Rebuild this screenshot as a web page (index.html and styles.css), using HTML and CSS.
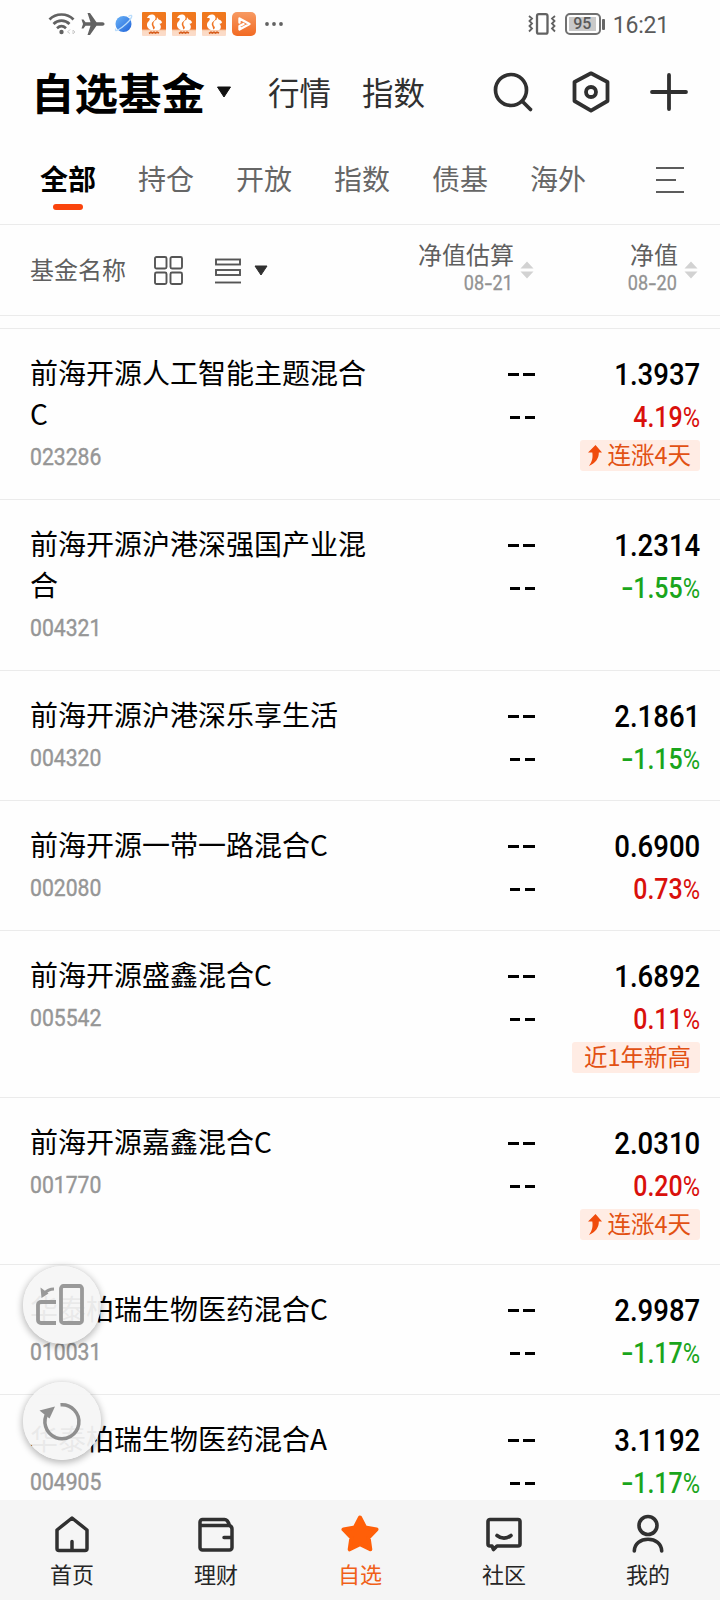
FILE: index.html
```html
<!DOCTYPE html>
<html lang="zh-CN">
<head>
<meta charset="utf-8">
<title>自选基金</title>
<link rel="stylesheet" href="styles.css">
</head>
<body>
<svg width="0" height="0" class="defs">
  <defs>
    <linearGradient id="orange" x1="0" y1="0" x2="0" y2="1"><stop offset="0" stop-color="#f07a1c"/><stop offset=".7" stop-color="#ef7226"/><stop offset=".78" stop-color="#fbd9c2"/><stop offset="1" stop-color="#fbdccb"/></linearGradient>
    <linearGradient id="play" x1="0" y1="0" x2="0" y2="1"><stop offset="0" stop-color="#f79a63"/><stop offset="1" stop-color="#f26a22"/></linearGradient>
    <linearGradient id="globe" x1="0" y1="0" x2="1" y2="1"><stop offset="0" stop-color="#6bb4f8"/><stop offset="1" stop-color="#1f62d8"/></linearGradient>
    <symbol id="squirrel" viewBox="0 0 24 24">
      <rect width="24" height="24" rx="1" fill="url(#orange)"/>
      <path d="M5 6C6.500 2.200 11 1.500 13 4c1.300 2 .2 4-1.500 5.200C9.500 10.500 9.200 12.500 10.500 14.500L11.500 18H9C6 17 4.500 14.500 5 12 5.400 10 7.500 9 8 6.800 7 6 6 6.200 5 6z" fill="#fff"/>
      <path d="M15 5.200l1.700 2.200c1.800.3 3 1.500 3.300 2.900-.4 1.200-1.500 1.500-2.700 1.500 1.500 1.200 2 3 1.200 4.600-.5 1-1.300 1.600-2.500 1.600h-5.500c1.700-.6 2.500-1.500 2.300-3-1.700-1.500-2-4-.6-5.700.7-.8 1.600-1.300 2.400-1.600z" fill="#fff"/>
      <path d="M7 21.500l2-1.300 1.300.8 1.700-.8 1.500.8 1.500-.8 2 .8" stroke="#d75d1c" stroke-width="1.600" fill="none"/>
    </symbol>
    <symbol id="sort" viewBox="0 0 14 18"><path d="M7 0.500L13.500 7.500H.5zM7 17.500L13.500 10.500H.5z" fill="#d2d2d2"/></symbol>
    <symbol id="rise" viewBox="0 0 14 21"><path d="M7.500 0L14 7.500H10.800C11 13.500 7.500 18 1 21 4.300 16.500 5 12.500 4.300 7.500H0z" fill="#f04b0c"/></symbol>
  </defs>
</svg>
<main class="screen">
  <header class="status">
    <svg class="st-wifi" width="28" height="24" viewBox="0 0 28 24" fill="none" stroke="#626262" stroke-width="2.700"><path d="M1.500 7.500C8 0.800 19 .8 25.500 7.500M5.500 12C10 7.500 17 7.500 21.500 12M9 16.200c3-2.700 6-2.700 9 0"/><circle cx="13.500" cy="20" r="2.200" fill="#626262" stroke="none"/><path d="M22 17.500l-2.500 2.500 2.500 1.500M25 18v4l2-2z" stroke="#ccc" stroke-width="1"/></svg>
    <svg class="st-plane" width="24" height="24" viewBox="0 0 24 24"><path d="M23.500 12c0-1-.8-1.700-2-1.700h-6L9 1H6.500l3 9.300H4.500L2.500 7.500H.5L2 12 .5 16.500h2l2-2.800h5L6.500 23H9l6.500-9.300h6c1.200 0 2-.7 2-1.700z" fill="#626262"/></svg>
    <svg class="st-globe" width="20" height="20" viewBox="0 0 20 20"><circle cx="9.500" cy="10" r="8" fill="url(#globe)"/><path d="M14.500 2.500C20-1 18 5 12 10 6 15.500-.5 19 2 14.500" fill="none" stroke="#b9dcfb" stroke-width="1.300"/></svg>
    <svg class="st-app" width="24" height="24"><use href="#squirrel"/></svg>
    <svg class="st-app" width="24" height="24"><use href="#squirrel"/></svg>
    <svg class="st-app" width="24" height="24"><use href="#squirrel"/></svg>
    <svg class="st-app" width="24" height="24" viewBox="0 0 24 24"><rect width="24" height="24" rx="5" fill="url(#play)"/><path d="M7.500 10.500V6.500L17.500 12 7.500 17.500V14l4-2" fill="none" stroke="#fff" stroke-width="2.400" stroke-linejoin="round" stroke-linecap="round"/></svg>
    <svg class="st-dots" width="18" height="4" viewBox="0 0 18 4" fill="#626262"><circle cx="2" cy="2" r="1.900"/><circle cx="9" cy="2" r="1.900"/><circle cx="16" cy="2" r="1.900"/></svg>
    <svg class="st-vib" width="28" height="22" viewBox="0 0 28 22" fill="none" stroke="#626262"><rect x="9" y="1.200" width="10.500" height="19.500" rx="1.800" stroke-width="2.300"/><path d="M1 3l3 2.500L1.500 8 4 10.500 1.500 13 4 15.500 1 18.500M27 3l-3 2.500L26.500 8 24 10.500l2.500 2.500-2.500 2.500 3 3" stroke-width="1.800"/></svg>
    <div class="battery"><span class="battery-level">95</span></div><i class="battery-tip"></i>
    <span class="clock">16:21</span>
  </header>

  <div class="titlebar">
    <h1 class="title">自选基金</h1>
    <svg class="caret" width="16" height="12" viewBox="0 0 16 12"><path d="M1.500 1h13L8 11z" fill="#111" stroke="#111" stroke-linejoin="round"/></svg>
    <span class="top-link">行情</span>
    <span class="top-link">指数</span>
    <div class="actions">
      <svg width="42" height="42" viewBox="0 0 42 42" fill="none" stroke="#303030" stroke-width="3.700" stroke-linecap="round"><circle cx="19" cy="19" r="15.500"/><path d="M30.500 30.500l8 8"/></svg>
      <svg width="42" height="44" viewBox="0 0 42 44" fill="none" stroke="#303030" stroke-width="3.800" stroke-linejoin="round"><path d="M21 3.300L37.500 12v19L21 40.700 4.500 31V12z"/><circle cx="21" cy="22" r="5"/></svg>
      <svg width="42" height="42" viewBox="0 0 42 42" stroke="#303030" stroke-width="3.800" stroke-linecap="round"><path d="M21 4v34M4 21h34"/></svg>
    </div>
  </div>

  <nav class="tabs">
    <span class="tab tab-on">全部</span><span class="tab">持仓</span><span class="tab">开放</span><span class="tab">指数</span><span class="tab">债基</span><span class="tab">海外</span>
    <svg class="tabs-menu" width="28" height="26" viewBox="0 0 28 26" stroke="#5c5c5c" stroke-width="2"><path d="M0 1h28M0 13h20M0 25h28"/></svg>
  </nav>

  <div class="columns">
    <span class="col-name">基金名称</span>
    <svg class="ic-grid" width="29" height="29" viewBox="0 0 29 29" fill="none" stroke="#555" stroke-width="1.900"><rect x="1" y="1" width="11.500" height="11.500" rx="1.500"/><rect x="16.500" y="1" width="11.500" height="11.500" rx="1.500"/><rect x="1" y="16.500" width="11.500" height="11.500" rx="1.500"/><rect x="16.500" y="16.500" width="11.500" height="11.500" rx="1.500"/></svg>
    <svg class="ic-list" width="26" height="26" viewBox="0 0 26 26" fill="none" stroke="#555" stroke-width="1.900"><rect x="1" y="1.500" width="24" height="5"/><rect x="1" y="12" width="24" height="5"/><path d="M0 24.500h26"/></svg>
    <svg class="ic-drop" width="14" height="11" viewBox="0 0 14 11"><path d="M1 1h12L7 10z" fill="#303030" stroke="#303030" stroke-linejoin="round"/></svg>
    <div class="sortcol"><div class="sort-text"><span class="sort-label">净值估算</span><span class="sort-date">08<em class="hy">-</em>21</span></div><svg width="14" height="18"><use href="#sort"/></svg></div>
    <div class="sortcol sortcol-last"><div class="sort-text"><span class="sort-label">净值</span><span class="sort-date">08<em class="hy">-</em>20</span></div><svg width="14" height="18"><use href="#sort"/></svg></div>
  </div>

  <section class="list">
    <article class="fund"><div class="info"><div class="name">前海开源人工智能主题混合C</div><div class="code">023286</div></div><div class="est"><i class="dash dash-lg"></i><i class="dash"></i></div><div class="nav"><b class="price">1.3937</b><b class="pct up">4.19<small>%</small></b><span class="tag"><svg width="14" height="21"><use href="#rise"/></svg><span class="tag-text">连涨4天</span></span></div></article>
    <article class="fund"><div class="info"><div class="name">前海开源沪港深强国产业混合</div><div class="code">004321</div></div><div class="est"><i class="dash dash-lg"></i><i class="dash"></i></div><div class="nav"><b class="price">1.2314</b><b class="pct down"><em class="hy">-</em>1.55<small>%</small></b></div></article>
    <article class="fund"><div class="info"><div class="name">前海开源沪港深乐享生活</div><div class="code">004320</div></div><div class="est"><i class="dash dash-lg"></i><i class="dash"></i></div><div class="nav"><b class="price">2.1861</b><b class="pct down"><em class="hy">-</em>1.15<small>%</small></b></div></article>
    <article class="fund"><div class="info"><div class="name">前海开源一带一路混合C</div><div class="code">002080</div></div><div class="est"><i class="dash dash-lg"></i><i class="dash"></i></div><div class="nav"><b class="price">0.6900</b><b class="pct up">0.73<small>%</small></b></div></article>
    <article class="fund"><div class="info"><div class="name">前海开源盛鑫混合C</div><div class="code">005542</div></div><div class="est"><i class="dash dash-lg"></i><i class="dash"></i></div><div class="nav"><b class="price">1.6892</b><b class="pct up">0.11<small>%</small></b><span class="tag tag-high"><span class="tag-text">近1年新高</span></span></div></article>
    <article class="fund"><div class="info"><div class="name">前海开源嘉鑫混合C</div><div class="code">001770</div></div><div class="est"><i class="dash dash-lg"></i><i class="dash"></i></div><div class="nav"><b class="price">2.0310</b><b class="pct up">0.20<small>%</small></b><span class="tag"><svg width="14" height="21"><use href="#rise"/></svg><span class="tag-text">连涨4天</span></span></div></article>
    <article class="fund"><div class="info"><div class="name">华泰柏瑞生物医药混合C</div><div class="code">010031</div></div><div class="est"><i class="dash dash-lg"></i><i class="dash"></i></div><div class="nav"><b class="price">2.9987</b><b class="pct down"><em class="hy">-</em>1.17<small>%</small></b></div></article>
    <article class="fund"><div class="info"><div class="name">华泰柏瑞生物医药混合A</div><div class="code">004905</div></div><div class="est"><i class="dash dash-lg"></i><i class="dash"></i></div><div class="nav"><b class="price">3.1192</b><b class="pct down"><em class="hy">-</em>1.17<small>%</small></b></div></article>
  </section>

  <div class="float float-rotate"><svg width="78" height="78" viewBox="0 0 78 78" fill="none" stroke="#999" stroke-width="3.800"><rect x="39" y="20" width="21" height="37" rx="2.500"/><path d="M34 36H19c-1.500 0-3 1-3 2.700V54c0 1.700 1.200 3 3 3h15"/><path d="M32 23c-5 0-7.500 2-9.500 4.500" stroke-width="3"/><path d="M18.500 21.500l1 10.500 7-4.500z" fill="#999" stroke="none"/></svg></div>
  <div class="float float-refresh"><svg width="78" height="78" viewBox="0 0 78 78" fill="none" stroke="#8f8f8f" stroke-width="3.500"><path d="M38.500 22.800A17 17 0 1 1 26 30"/><path d="M17.500 28.500L33 24.500l-5.500 12z" fill="#8f8f8f" stroke="none"/></svg></div>

  <footer class="bottom">
    <div class="item"><svg width="40" height="40" viewBox="0 0 40 40" fill="none" stroke="#303030" stroke-width="3.500" stroke-linejoin="round" stroke-linecap="round"><path d="M20 4L35 16V34.500a2 2 0 0 1-2 2H7a2 2 0 0 1-2-2V16zM20 27.500v8"/></svg><span>首页</span></div>
    <div class="item"><svg width="40" height="40" viewBox="0 0 40 40" fill="none" stroke="#303030" stroke-width="3.500" stroke-linejoin="round" stroke-linecap="round"><path d="M4 8a2.500 2.500 0 0 1 2.500-2.500h22c2.500 0 4 2.500 5 6 1.500.5 2.500 1.500 2.500 3.500V33.500a2.500 2.500 0 0 1-2.500 2.500H6.500A2.500 2.500 0 0 1 4 33.500zM4 11.500h29M28 23.500h8"/></svg><span>理财</span></div>
    <div class="item item-on"><svg width="40" height="40" viewBox="0 0 40 40"><path d="M20 3.500l5.200 10 11.300 1.900-7.900 8.200 1.700 11.700L20 30.200 9.700 35.300l1.700-11.700-7.900-8.200L14.800 13.500z" fill="#ff5f08" stroke="#ff5f08" stroke-width="4" stroke-linejoin="round"/></svg><span>自选</span></div>
    <div class="item"><svg width="40" height="40" viewBox="0 0 40 40" fill="none" stroke="#303030" stroke-width="3.600" stroke-linejoin="round" stroke-linecap="round"><path d="M6 5.500h28a2 2 0 0 1 2 2V30a2 2 0 0 1-2 2H13l-3.500 3.500L8 32H6a2 2 0 0 1-2-2V7.500a2 2 0 0 1 2-2zM13 21.500c4.500 3.500 9.500 3.500 14 0"/></svg><span>社区</span></div>
    <div class="item"><svg width="40" height="40" viewBox="0 0 40 40" fill="none" stroke="#303030" stroke-width="3.600" stroke-linecap="round"><circle cx="20" cy="11.500" r="9"/><path d="M6.300 37C6.500 29.500 12.500 25.300 20 25.300S33.500 29.500 33.700 37"/></svg><span>我的</span></div>
  </footer>
</main>
</body>
</html>
```

FILE: styles.css
```css
* { box-sizing: border-box; }
body { margin: 0; background: #fff; font-family: "Noto Sans CJK SC", sans-serif; color: #000; }
i { display: block; }
.defs { position: absolute; }
.screen { position: relative; width: 720px; height: 1600px; overflow: hidden; display: flex; flex-direction: column; background: #fefefe; }

.status { height: 48px; display: flex; align-items: center; padding: 0 51px 0 48px; font-family: Roboto, sans-serif; color: #5a5a5a; flex: none; }
.st-plane { margin-left: 5px; }
.st-globe { margin-left: 9px; margin-right: 0; }
.st-app { margin-left: 6px; }
.st-globe + .st-app { margin-left: 8px; }
.st-dots { margin-left: 9px; }
.st-vib { margin-left: auto; }
.battery { width: 36px; height: 22px; margin-left: 9px; padding: 2px; border: 2px solid #707070; border-radius: 5px; }
.battery-level { display: block; width: 27px; height: 14px; background: #c9c9c9; font-size: 16px; line-height: 14px; font-weight: 500; text-align: center; }
.battery-tip { width: 3px; height: 11px; margin-left: 1px; border-radius: 1px; background: #666; }
.clock { margin-left: 8px; font-size: 23px; line-height: 46px; padding-top: 3px; letter-spacing: -.2px; }

.titlebar { height: 88px; display: flex; align-items: center; padding: 0 30px 0 31px; flex: none; }
.title { margin: 0; font-size: 43.500px; line-height: 60px; font-weight: 700; }
.caret { margin-left: 11px; }
.top-link { margin: -3px 0 0 36px; font-size: 31.500px; color: #303030; }
.top-link + .top-link { margin-left: 31px; }
.actions { display: flex; align-items: center; gap: 36px; margin-left: auto; }

.tabs { height: 89px; display: flex; align-items: flex-start; gap: 42px; padding: 22px 36px 0 40px; border-bottom: 1px solid #ebebeb; flex: none; }
.tab { width: 56px; font-size: 28px; line-height: 41px; color: #666; text-align: center; white-space: nowrap; }
.tab-on { color: #000; font-weight: 700; }
.tab-on::after { content: ""; display: block; width: 30px; height: 6px; margin: 5px auto 0; border-radius: 3px; background: #fa440c; }
.tabs-menu { margin: 9px 0 0 auto; }

.columns { height: 91px; display: flex; align-items: center; padding: 0 22px 0 30px; border-bottom: 1px solid #ebebeb; color: #5f5f5f; flex: none; }
.col-name { font-size: 24px; margin-top: -3px; }
.ic-grid { margin-left: 28px; }
.ic-list { margin: 2px 0 0 32px; }
.ic-drop { margin-left: 13px; }
.sortcol { display: flex; align-items: center; gap: 6px; margin-left: auto; }
.sortcol-last { width: 164px; justify-content: flex-end; margin-left: 0; }
.sort-text { display: flex; flex-direction: column; align-items: flex-end; margin-top: -5px; }
.sort-label { font-size: 24px; line-height: 30px; }
.sort-date { font-family: Roboto, sans-serif; font-size: 20.500px; line-height: 28px; color: #929292; -webkit-text-stroke: .3px #929292; transform: scaleX(.88); transform-origin: right; padding-right: 1px; }
.hy { display: inline-block; font-style: normal; transform: scaleX(1.45); margin: 0 2px; }

.list { flex: 1; min-height: 0; overflow: hidden; margin-top: 12px; border-top: 1px solid #ebebeb; }
.fund { display: flex; align-items: flex-start; padding: 25px 20px 20px 30px; border-bottom: 1px solid #ebebeb; }
.info { width: 345px; margin-top: -2px; }
.name { font-size: 28px; line-height: 41px; word-break: break-all; }
.code { font-family: Roboto, sans-serif; font-size: 23px; line-height: 43px; padding-top: 2px; color: #969696; -webkit-text-stroke: .4px #969696; transform: scaleX(.92); transform-origin: left; }
.est { width: 160px; display: flex; flex-direction: column; align-items: flex-end; padding-top: 19px; gap: 40px; }
.dash { width: 25px; height: 3px; background: linear-gradient(90deg, #000 10px, transparent 10px, transparent 15px, #000 15px); }
.dash-lg { width: 27px; background: linear-gradient(90deg, #000 11px, transparent 11px, transparent 15px, #000 15px); }
.nav { flex: 1; display: flex; flex-direction: column; align-items: flex-end; }
.price, .pct { font-family: Roboto, sans-serif; font-weight: 500; transform-origin: right; white-space: nowrap; }
.price { font-size: 31.500px; line-height: 41px; transform: scaleX(.875); }
.pct { font-size: 29.500px; line-height: 43px; transform: translateY(1px) scaleX(.845); }
.pct small { font-size: 28px; font-weight: 400; }
.up { color: #d9100c; }
.down { color: #1aa51c; }
.tag { height: 31px; margin: 2px 0 4px; padding: 0 9px 0 8px; display: flex; align-items: center; gap: 5px; border-radius: 3px; background: #ffece4; color: #e25113; font-size: 23.500px; line-height: 31px; white-space: nowrap; }
.tag-text { margin-top: -3px; }
.tag-high { padding-left: 12px; }

.float { position: absolute; left: 23px; width: 78px; height: 78px; border-radius: 50%; background: rgba(246, 246, 246, .95); box-shadow: 0 2px 7px 1px rgba(0, 0, 0, .28); }
.float svg { display: block; margin-left: -1px; }
.float-rotate { top: 1266px; }
.float-refresh { top: 1382px; }

.bottom { height: 100px; display: flex; background: #f5f5f5; flex: none; position: relative; }
.item { flex: 1; display: flex; flex-direction: column; align-items: center; padding-top: 14px; font-size: 22px; line-height: 32px; color: #252525; }
.item svg { margin-bottom: 3px; }
.item-on { color: #f06018; }
```
